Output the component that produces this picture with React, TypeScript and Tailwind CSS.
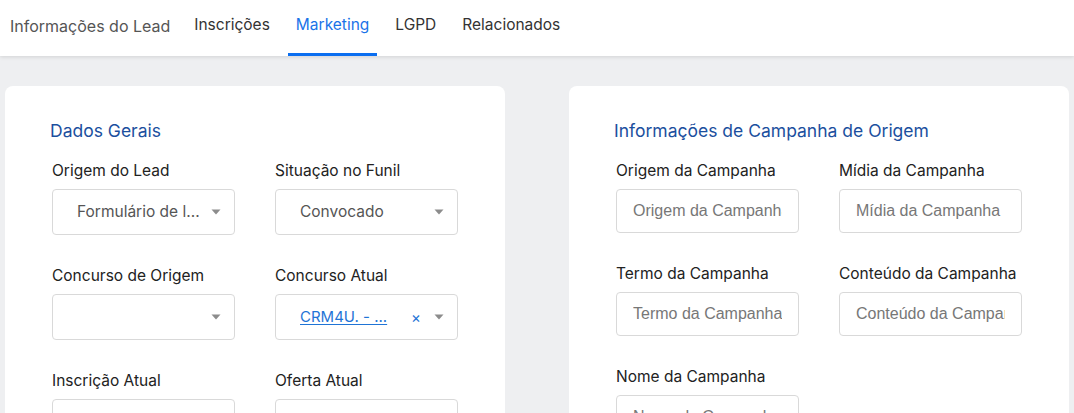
import type { ReactNode } from 'react'

const font = { fontFamily: 'Inter, "Noto Sans", sans-serif' }

const tabs = [
  { label: 'Inscrições', active: false },
  { label: 'Marketing', active: true },
  { label: 'LGPD', active: false },
  { label: 'Relacionados', active: false },
]

function Caret() {
  return (
    <svg width="10" height="6" viewBox="0 0 10 6" className="shrink-0">
      <path d="M0.5 0.5h9L5 5.5z" fill="#8c8c8c" />
    </svg>
  )
}

function Field({ label, children }: { label: string; children: ReactNode }) {
  return (
    <div className="flex flex-col">
      <span className="mb-[8px] h-[20px] whitespace-nowrap text-[15.5px] leading-[20px] text-[#222]">{label}</span>
      {children}
    </div>
  )
}

function Select({ value, link, clear }: { value?: string; link?: boolean; clear?: boolean }) {
  return (
    <div className="flex h-[46px] items-center rounded-[4px] border border-[#d9d9d9] bg-white pl-[24px] pr-[13px]">
      <span
        className={
          link
            ? 'flex-1 truncate text-[15px] text-[#1f74d6] underline underline-offset-2'
            : 'flex-1 truncate text-[15.5px] text-[#555]'
        }
      >
        {value}
      </span>
      {clear && <span className="mr-[13px] text-[15px] leading-none text-[#1f74d6]">×</span>}
      <Caret />
    </div>
  )
}

function Input({ placeholder }: { placeholder: string }) {
  return (
    <input
      readOnly
      placeholder={placeholder}
      className="h-[44px] w-full rounded-[4px] border border-[#d9d9d9] bg-white px-[16px] text-[16px] text-[#333] outline-none placeholder:text-[#777]"
      style={{ fontFamily: '"Liberation Sans", Arial, sans-serif' }}
    />
  )
}

function Card({ title, children }: { title: string; children: ReactNode }) {
  return (
    <section className="h-[400px] w-[500px] shrink-0 rounded-[8px] bg-white pl-[45px] pt-[33px]">
      <h2 className="mb-[18px] whitespace-nowrap text-[17.5px] leading-[24px] text-[#1b4f9e]">{title}</h2>
      {children}
    </section>
  )
}

export default function App() {
  return (
    <div className="h-screen overflow-hidden bg-[#eeeff1]" style={font}>
      <nav className="relative z-10 flex h-[56px] items-stretch bg-white pl-[10px] shadow-[0_1px_4px_rgba(0,0,0,0.12)]">
        <span className="mr-[16px] flex items-center pb-[4px] text-[16px] text-[#555]">Informações do Lead</span>
        <div className="flex gap-[10px]">
          {tabs.map((t) => (
            <div
              key={t.label}
              className={
                t.active
                  ? 'flex items-center border-b-[3px] border-[#0a6ef0] px-[8px] pt-[1px] text-[15.5px] text-[#1a73e8]'
                  : 'flex items-center border-b-[3px] border-transparent px-[8px] pt-[1px] text-[15.5px] text-[#333]'
              }
            >
              <span className="-mt-[4px]">{t.label}</span>
            </div>
          ))}
        </div>
      </nav>

      <div className="flex gap-[64px] pl-[5px] pt-[30px]">
        <Card title="Dados Gerais">
          <div className="grid grid-cols-[183px_183px] gap-x-[40px] gap-y-[31px] pl-[2px]">
            <Field label="Origem do Lead">
              <Select value="Formulário de l..." />
            </Field>
            <Field label="Situação no Funil">
              <Select value="Convocado" />
            </Field>
            <Field label="Concurso de Origem">
              <Select />
            </Field>
            <Field label="Concurso Atual">
              <Select value="CRM4U. - ..." link clear />
            </Field>
            <Field label="Inscrição Atual">
              <Select />
            </Field>
            <Field label="Oferta Atual">
              <Select />
            </Field>
          </div>
        </Card>

        <Card title="Informações de Campanha de Origem">
          <div className="grid grid-cols-[183px_183px] gap-x-[40px] gap-y-[31px] pl-[2px]">
            <Field label="Origem da Campanha">
              <Input placeholder="Origem da Campanha" />
            </Field>
            <Field label="Mídia da Campanha">
              <Input placeholder="Mídia da Campanha" />
            </Field>
            <Field label="Termo da Campanha">
              <Input placeholder="Termo da Campanha" />
            </Field>
            <Field label="Conteúdo da Campanha">
              <Input placeholder="Conteúdo da Campanha" />
            </Field>
            <Field label="Nome da Campanha">
              <Input placeholder="Nome da Campanha" />
            </Field>
          </div>
        </Card>
      </div>
    </div>
  )
}
